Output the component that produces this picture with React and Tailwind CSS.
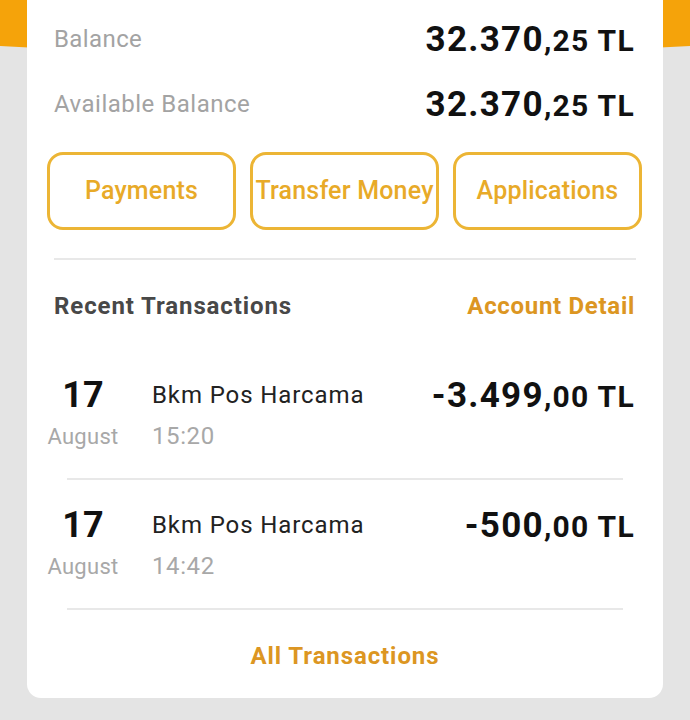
export default function App() {
  const font = { fontFamily: "Roboto, 'Noto Sans', sans-serif" };
  const Amount = ({ main, rest }) => (
    <div className="font-bold text-[#111] whitespace-nowrap leading-none">
      <span className="text-[35px] tracking-[1.3px]">{main}</span>
      <span className="text-[30px] tracking-[1.3px]">{rest}</span>
    </div>
  );
  const Tx = ({ name, time, main, rest }) => (
    <div className="flex items-start pl-[20px] pr-[28px] pt-[25px] h-[128px]">
      <div className="w-[72px] flex flex-col items-center">
        <div className="h-[40px] flex items-center text-[36px] font-bold text-[#111]">17</div>
        <div className="mt-[5px] h-[32px] flex items-center text-[22px] tracking-[0.3px] text-[#a8a8a8]">August</div>
      </div>
      <div className="ml-[33px] flex flex-col">
        <div className="h-[40px] flex items-center text-[24px] tracking-[0.9px] text-[#222]">{name}</div>
        <div className="mt-[5px] h-[32px] flex items-center text-[24px] tracking-[0.6px] text-[#a8a8a8]">{time}</div>
      </div>
      <div className="ml-auto h-[40px] flex items-center">
        <Amount main={main} rest={rest} />
      </div>
    </div>
  );
  return (
    <div className="relative w-[690px] h-[720px] bg-[#e4e4e4] overflow-hidden" style={font}>
      <svg className="absolute left-0 top-0" width="690" height="70" viewBox="0 0 690 70">
        <path d="M0 0 H690 V46 Q345 66 0 46 Z" fill="#f5a30a" />
      </svg>
      <div className="relative mx-[27px] bg-white rounded-b-[14px] h-[698px] flex flex-col">
        <div className="flex items-center justify-between pl-[27px] pr-[28px] h-[78px]">
          <span className="text-[24px] tracking-[0.4px] text-[#a3a3a3]">Balance</span>
          <Amount main="32.370" rest=",25 TL" />
        </div>
        <div className="flex items-center justify-between pl-[27px] pr-[28px] h-[52px]">
          <span className="text-[24px] tracking-[0.5px] text-[#a3a3a3]">Available Balance</span>
          <Amount main="32.370" rest=",25 TL" />
        </div>
        <div className="mt-[22px] pl-[20px] pr-[21px] grid grid-cols-3 gap-[14px] h-[78px]">
          {["Payments", "Transfer Money", "Applications"].map((t) => (
            <div
              key={t}
              className="border-[3px] border-[#ecb535] rounded-[16px] flex items-center justify-center text-[25px] font-medium text-[#e8aa28] whitespace-nowrap tracking-[0.2px]"
            >
              {t}
            </div>
          ))}
        </div>
        <div className="mt-[28px] mx-[27px] h-[2px] bg-[#e8e8e8]" />
        <div className="h-[90px] flex items-center justify-between pl-[27px] pr-[28px] pt-[2px]">
          <span className="text-[24px] font-bold tracking-[0.9px] text-[#484848]">Recent Transactions</span>
          <span className="text-[24px] font-bold tracking-[0.7px] text-[#dc9622]">Account Detail</span>
        </div>
        <Tx name="Bkm Pos Harcama" time="15:20" main="-3.499" rest=",00 TL" />
        <div className="mx-[40px] h-[2px] bg-[#e8e8e8]" />
        <Tx name="Bkm Pos Harcama" time="14:42" main="-500" rest=",00 TL" />
        <div className="mx-[40px] h-[2px] bg-[#e8e8e8]" />
        <div className="flex-1 flex items-center justify-center pt-[4px]">
          <span className="text-[24px] font-bold tracking-[0.9px] text-[#dc9622]">All Transactions</span>
        </div>
      </div>
    </div>
  );
}
